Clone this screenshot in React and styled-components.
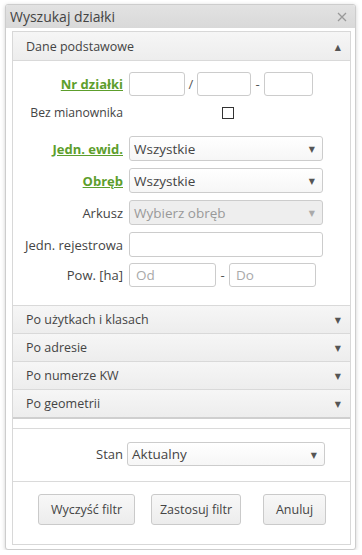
import React from 'react';
import styled, { createGlobalStyle } from 'styled-components';

const GlobalStyle = createGlobalStyle`
  body {
    margin: 0;
    background: #fff;
    font-family: "Open Sans", "DejaVu Sans", sans-serif;
    color: #444;
  }
  * { box-sizing: border-box; }
`;

const Dialog = styled.div`
  width: 351px;
  margin: 4px 0 0 5px;
  border: 1px solid #cdcdcd;
  border-radius: 3px;
  background: #fff;
  box-shadow: 0 1px 4px rgba(0, 0, 0, 0.18);
  overflow: hidden;
`;

const TitleBar = styled.div`
  height: 23px;
  display: flex;
  align-items: center;
  justify-content: space-between;
  padding: 0 8px 0 4px;
  background: linear-gradient(#e2e2e2, #d9d9d9);
  font-size: 14px;
  color: #444;
`;

const CloseIcon = () => (
  <svg width="10" height="10" viewBox="0 0 10 10">
    <path d="M1 1 L9 9 M9 1 L1 9" stroke="#999" strokeWidth="1.3" fill="none" />
  </svg>
);

const DialogBody = styled.div`
  padding: 3px 4px 4px 6px;
`;

const Frame = styled.div`
  border: 1px solid #d8d8d8;
`;

const Accordion = styled.div`
  border-bottom: 2px solid #cfcfcf;
`;

const SectionHeader = styled.div`
  height: ${(p) => (p.$first ? '29px' : '28px')};
  display: flex;
  align-items: center;
  justify-content: space-between;
  padding: 0 9px 0 13px;
  background: linear-gradient(#f6f6f6, #ededed);
  border-top: ${(p) => (p.$first ? 'none' : '1px solid #d9d9d9')};
  border-bottom: ${(p) => (p.$first ? '1px solid #d9d9d9' : 'none')};
  font-size: 12.5px;
  color: #444;
`;

const Caret = styled.span`
  font-size: 8px;
  color: #555;
`;

const Form = styled.div`
  padding: 11px 27px 18px 0;
  display: flex;
  flex-direction: column;
`;

const Row = styled.div`
  display: grid;
  grid-template-columns: 110px 1fr;
  column-gap: ${(p) => p.$colGap || '6px'};
  align-items: ${(p) => (p.$top ? 'start' : 'center')};
  margin-top: ${(p) => p.$mt || 0}px;
  height: ${(p) => p.$h || 24}px;
`;

const Label = styled.div`
  text-align: right;
  font-size: ${(p) => p.$size || 13}px;
  line-height: 16px;
  color: #444;
  white-space: nowrap;
  padding-top: ${(p) => (p.$top ? '5px' : 0)};
`;

const LinkLabel = styled(Label)`
  color: #5d9e2c;
  font-weight: bold;
  text-decoration: underline;
`;

const Fields = styled.div`
  display: flex;
  align-items: center;
`;

const Sep = styled.span`
  font-size: 13px;
  color: #555;
  width: ${(p) => p.$w}px;
  text-align: center;
`;

const TextInput = styled.input`
  width: ${(p) => (p.$w ? `${p.$w}px` : '100%')};
  height: ${(p) => p.$h || 24}px;
  border: 1px solid #cccccc;
  border-radius: 3px;
  padding: 0 6px;
  font-family: inherit;
  font-size: 13.5px;
  color: #444;
  background: #fff;
  outline: none;
  &::placeholder {
    color: #a9a9a9;
  }
`;

const CheckCell = styled.div`
  display: flex;
  justify-content: center;
  padding-left: 4px;
`;

const Check = styled.span`
  width: 12px;
  height: 12px;
  border: 1px solid #333;
  background: #fff;
`;

const Select = styled.div`
  height: ${(p) => p.$h || 25}px;
  width: 100%;
  display: flex;
  align-items: center;
  justify-content: space-between;
  padding: 0 7px 0 4px;
  border: 1px solid #cccccc;
  border-radius: 3px;
  background: ${(p) => (p.$disabled ? '#eeeeee' : 'linear-gradient(#ffffff, #f6f6f6)')};
  font-size: 13.5px;
  color: ${(p) => (p.$disabled ? '#999' : '#444')};
`;

const SelectCaret = styled.span`
  font-size: 8px;
  color: ${(p) => (p.$disabled ? '#aaa' : '#555')};
`;

const StanSection = styled.div`
  margin-top: 9px;
  border-top: 1px solid #dadada;
  padding: 13px 25px 15px 0;
`;

const ButtonBar = styled.div`
  border-top: 1px solid #dadada;
  padding: 12px 0 19px 25px;
  display: flex;
`;

const Button = styled.button`
  width: ${(p) => p.$w}px;
  height: 31px;
  margin-left: ${(p) => p.$ml || 0}px;
  border: 1px solid #cacaca;
  border-radius: 3px;
  background: linear-gradient(#f8f8f8, #ececec);
  font-family: inherit;
  font-size: 12.5px;
  color: #444;
  padding: 0;
`;

const SelectField = ({ value, disabled, h }) => (
  <Select $disabled={disabled} $h={h}>
    <span>{value}</span>
    <SelectCaret $disabled={disabled}>▼</SelectCaret>
  </Select>
);

const collapsed = ['Po użytkach i klasach', 'Po adresie', 'Po numerze KW', 'Po geometrii'];

export default function App() {
  return (
    <>
      <GlobalStyle />
      <Dialog>
        <TitleBar>
          <span>Wyszukaj działki</span>
          <CloseIcon />
        </TitleBar>
        <DialogBody>
          <Frame>
            <Accordion>
              <SectionHeader $first>
                <span>Dane podstawowe</span>
                <Caret>▲</Caret>
              </SectionHeader>
              <Form>
                <Row $h={24}>
                  <LinkLabel>Nr działki</LinkLabel>
                  <Fields>
                    <TextInput $w={56} />
                    <Sep $w={12}>/</Sep>
                    <TextInput $w={54} />
                    <Sep $w={13}>-</Sep>
                    <TextInput $w={49} />
                  </Fields>
                </Row>
                <Row $mt={9} $h={16}>
                  <Label $size={12.2}>Bez mianownika</Label>
                  <CheckCell>
                    <Check />
                  </CheckCell>
                </Row>
                <Row $mt={15} $h={25}>
                  <LinkLabel>Jedn. ewid.</LinkLabel>
                  <SelectField value="Wszystkie" />
                </Row>
                <Row $mt={7} $h={25}>
                  <LinkLabel>Obręb</LinkLabel>
                  <SelectField value="Wszystkie" />
                </Row>
                <Row $mt={7} $h={25}>
                  <Label>Arkusz</Label>
                  <SelectField value="Wybierz obręb" disabled />
                </Row>
                <Row $mt={7} $h={25} $top>
                  <Label $top>Jedn. rejestrowa</Label>
                  <TextInput $h={25} />
                </Row>
                <Row $mt={6} $h={24}>
                  <Label>Pow. [ha]</Label>
                  <Fields>
                    <TextInput $w={87} placeholder="Od" />
                    <Sep $w={13}>-</Sep>
                    <TextInput $w={87} placeholder="Do" />
                  </Fields>
                </Row>
              </Form>
              {collapsed.map((title) => (
                <SectionHeader key={title}>
                  <span>{title}</span>
                  <Caret>▼</Caret>
                </SectionHeader>
              ))}
            </Accordion>
            <StanSection>
              <Row $h={24} $colGap="4px">
                <Label>Stan</Label>
                <SelectField value="Aktualny" h={24} />
              </Row>
            </StanSection>
            <ButtonBar>
              <Button $w={97}>Wyczyść filtr</Button>
              <Button $w={90} $ml={16}>Zastosuj filtr</Button>
              <Button $w={63} $ml={22}>Anuluj</Button>
            </ButtonBar>
          </Frame>
        </DialogBody>
      </Dialog>
    </>
  );
}
